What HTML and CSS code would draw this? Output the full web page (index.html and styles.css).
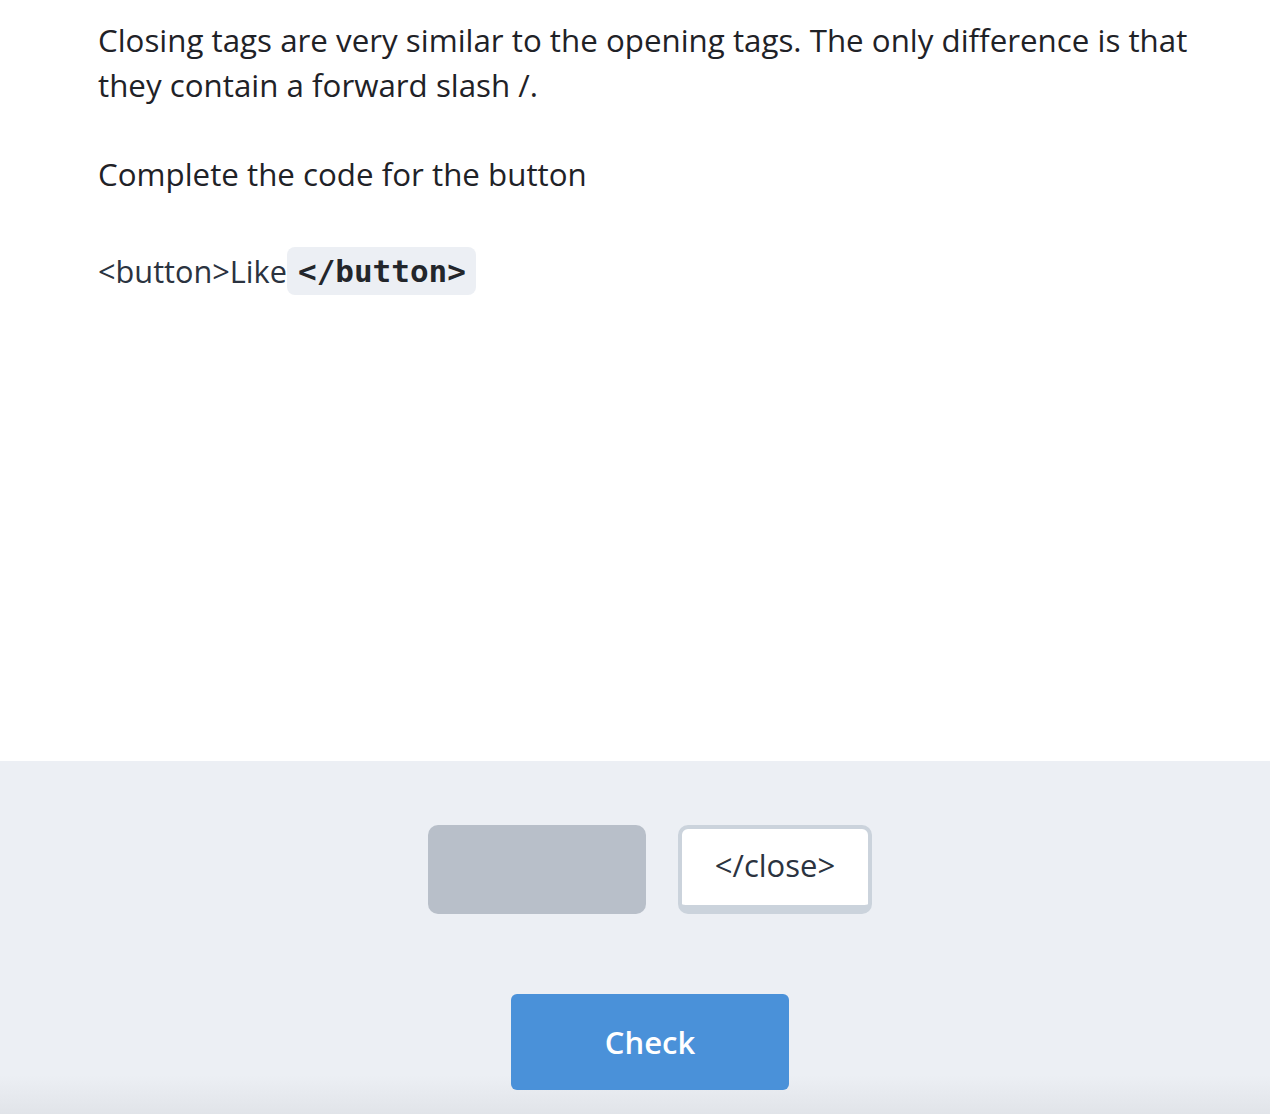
FILE: index.html
```html
<!DOCTYPE html>
<html lang="en">
<head>
<meta charset="utf-8">
<title>Closing tags</title>
<link rel="stylesheet" href="styles.css">
</head>
<body>
<div class="page">
  <main class="lesson">
    <p class="text">Closing tags are very similar to the opening tags. The only difference is that they contain a forward slash /.</p>
    <p class="text">Complete the code for the button</p>
    <p class="code-line"><span class="plain">&lt;button&gt;Like</span><code class="answer">&lt;/button&gt;</code></p>
  </main>
  <section class="tray">
    <div class="options">
      <div class="slot"></div>
      <button class="option">&lt;/close&gt;</button>
    </div>
    <button class="check">Check</button>
  </section>
</div>
</body>
</html>
```
FILE: styles.css
```css
html, body {
  margin: 0;
  padding: 0;
  height: 100%;
}
body {
  font-family: "Open Sans", "Noto Sans", sans-serif;
  color: #1f2227;
  background: #ffffff;
}
.page {
  display: flex;
  flex-direction: column;
  height: 1114px;
}
.lesson {
  flex: 1;
  padding: 18px 0 0 98px;
  width: 1110px;
}
.text {
  margin: 0 0 44px;
  font-size: 31.3px;
  line-height: 45px;
}
.code-line {
  margin: 50px 0 0;
  display: flex;
  align-items: center;
  font-size: 30.7px;
  line-height: 45px;
  color: #2b3340;
}
.text + .text {
  margin-top: 0;
}
.answer {
  display: inline-block;
  margin-left: 0;
  padding: 0 10px 0 11px;
  height: 48px;
  line-height: 48px;
  border-radius: 8px;
  background: #eceff4;
  font-family: "DejaVu Sans Mono", "Liberation Mono", monospace;
  font-weight: 700;
  font-size: 31px;
  color: #23262b;
}
.tray {
  height: 353px;
  background: linear-gradient(to bottom, #eceff4 0, #eceff4 314px, #e1e4e9 353px);
  display: flex;
  flex-direction: column;
  align-items: center;
  padding-left: 30px;
  box-sizing: border-box;
}
.options {
  display: flex;
  gap: 32px;
  margin-top: 64px;
}
.slot {
  width: 218px;
  height: 89px;
  border-radius: 10px;
  background: #b8bfc9;
}
.option {
  box-sizing: border-box;
  width: 194px;
  height: 89px;
  border: 4px solid #cbd3dc;
  border-bottom-width: 9px;
  border-radius: 10px;
  background: #ffffff;
  font-family: "Open Sans", "Noto Sans", sans-serif;
  font-size: 31px;
  color: #2b3340;
  padding: 0 0 4px;
}
.check {
  margin-top: 80px;
  width: 278px;
  height: 96px;
  border: none;
  border-radius: 6px;
  background: #4a91d9;
  color: #ffffff;
  font-family: "Open Sans", "Noto Sans", sans-serif;
  font-weight: 600;
  font-size: 31px;
}
```
